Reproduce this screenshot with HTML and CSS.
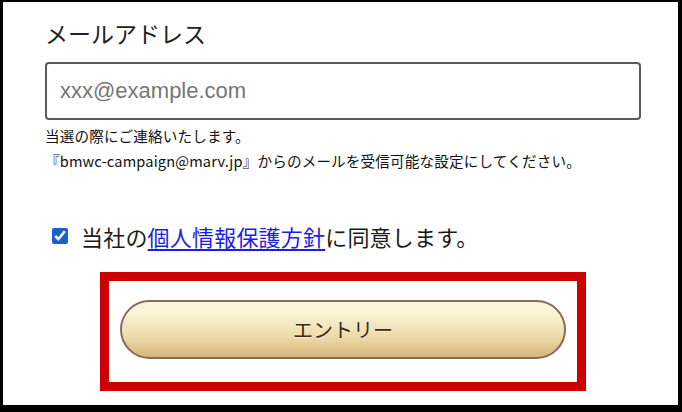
FILE: index.html
```html
<!DOCTYPE html>
<html lang="ja">
<head>
<meta charset="utf-8">
<title>エントリー</title>
<link rel="stylesheet" href="styles.css">
</head>
<body>
<div class="frame">
  <form class="form">
    <label class="label" for="email">メールアドレス</label>
    <input class="input" id="email" type="email" placeholder="xxx@example.com">
    <p class="note">当選の際にご連絡いたします。<br>『bmwc-campaign@marv.jp』からのメールを受信可能な設定にしてください。</p>
    <div class="agree">
      <input class="check" type="checkbox" checked>
      <span class="agree-text">当社の<a class="link" href="#">個人情報保護方針</a>に同意します。</span>
    </div>
    <div class="highlight">
      <button class="entry" type="button">エントリー</button>
    </div>
  </form>
</div>
</body>
</html>
```

FILE: styles.css
```css
html, body {
  margin: 0;
  padding: 0;
  background: #fff;
}
.frame {
  box-sizing: border-box;
  width: 682px;
  height: 412px;
  border-style: solid;
  border-color: #000;
  border-width: 2px 4px 7px 3px;
  background: #fff;
  padding: 16px 37px 0 42px;
  font-family: "Noto Sans CJK JP", "Noto Sans", sans-serif;
  color: #1a1a1a;
  overflow: hidden;
}
.form {
  display: flex;
  flex-direction: column;
}
.label {
  font-size: 23px;
  line-height: 30px;
  height: 30px;
  color: #222;
}
.input {
  box-sizing: border-box;
  margin-top: 14px;
  width: 596px;
  height: 58px;
  border: 2px solid #5a5a5a;
  border-radius: 4px;
  padding: 0 13px;
  font-family: "Liberation Sans", Arial, sans-serif;
  font-size: 22px;
  color: #222;
  outline: none;
}
.input::placeholder {
  color: #767676;
}
.note {
  margin: 3px 0 0;
  font-size: 14.6px;
  letter-spacing: 0.15px;
  line-height: 25px;
  color: #111;
}
.agree {
  margin-top: 47px;
  display: flex;
  align-items: center;
  height: 32px;
  padding-left: 7px;
}
.check {
  margin: 0;
  width: 16px;
  height: 16px;
  accent-color: #1b5fd0;
}
.agree-text {
  margin-left: 13px;
  font-size: 22px;
  letter-spacing: 0.2px;
  line-height: 32px;
  color: #1a1a1a;
}
.link {
  color: #1d1de6;
  text-decoration: underline;
  text-underline-offset: 3px;
}
.highlight {
  box-sizing: border-box;
  align-self: center;
  margin-top: 20px;
  width: 486px;
  height: 119px;
  border: 9px solid #cc0000;
  padding: 19px 11px 0;
  display: flex;
  flex-direction: column;
}
.entry {
  box-sizing: border-box;
  width: 100%;
  height: 59px;
  border: 2px solid #8b6a52;
  border-radius: 30px;
  background: linear-gradient(to bottom, #fdf6dc 0%, #fbf4d8 20%, #ecd9a8 65%, #d5b57a 100%);
  font-family: "Noto Sans CJK JP", "Noto Sans", sans-serif;
  font-size: 20px;
  color: #3a2a14;
  cursor: pointer;
  text-shadow: 0 1px 0 rgba(255, 255, 255, 0.5);
}
```
